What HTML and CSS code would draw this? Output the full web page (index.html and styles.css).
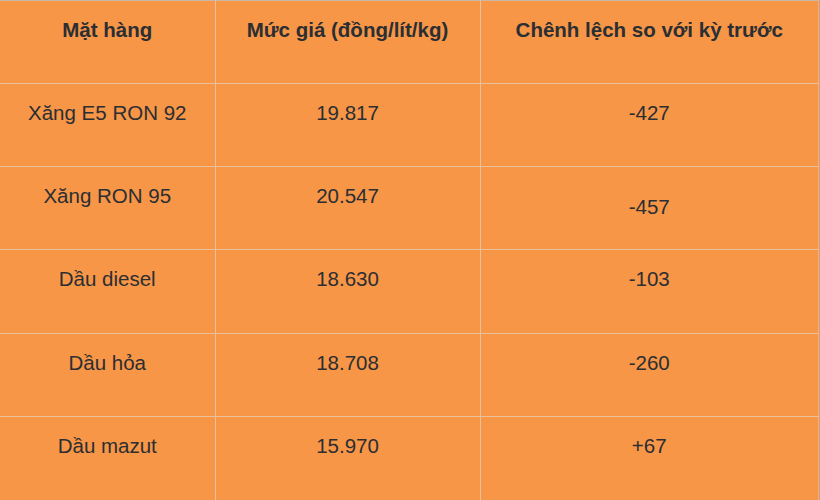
FILE: index.html
```html
<!DOCTYPE html>
<html lang="vi">
<head>
<meta charset="utf-8">
<link rel="stylesheet" href="styles.css">
</head>
<body>
<table class="price-table">
  <thead>
    <tr>
      <th class="c1">Mặt hàng</th>
      <th class="c2">Mức giá (đồng/lít/kg)</th>
      <th class="c3">Chênh lệch so với kỳ trước</th>
    </tr>
  </thead>
  <tbody>
    <tr>
      <td>Xăng E5 RON 92</td>
      <td>19.817</td>
      <td>-427</td>
    </tr>
    <tr>
      <td>Xăng RON 95</td>
      <td>20.547</td>
      <td class="lower">-457</td>
    </tr>
    <tr class="tall">
      <td>Dầu diesel</td>
      <td>18.630</td>
      <td>-103</td>
    </tr>
    <tr>
      <td>Dầu hỏa</td>
      <td>18.708</td>
      <td>-260</td>
    </tr>
    <tr class="last">
      <td>Dầu mazut</td>
      <td>15.970</td>
      <td>+67</td>
    </tr>
  </tbody>
</table>
</body>
</html>
```

FILE: styles.css
```css
html, body {
  margin: 0;
  padding: 0;
  background: #f79646;
}

.price-table {
  border-collapse: collapse;
  width: 819px;
  table-layout: fixed;
  font-family: "Liberation Sans", Arial, sans-serif;
  font-size: 20.5px;
  color: #2b2e33;
  background: #f79646;
  border-top: 1px solid #c9b8a8;
  border-right: 1px solid #c9b8a8;
}

.price-table th,
.price-table td {
  height: 83px;
  box-sizing: border-box;
  padding: 18px 8px 0;
  vertical-align: top;
  text-align: center;
  border-bottom: 1px solid #ebc19d;
  border-left: 1px solid #ebc19d;
  line-height: 1.117;
}

.price-table th:first-child,
.price-table td:first-child {
  border-left: none;
}

.price-table th {
  font-weight: bold;
}

.c1 { width: 215px; }
.c2 { width: 265px; }
.c3 { width: auto; }

.price-table td.lower {
  padding-top: 29px;
}

.price-table tr.tall td {
  height: 84px;
}

.price-table tr.last td {
  height: 90px;
  border-bottom: none;
}
```
